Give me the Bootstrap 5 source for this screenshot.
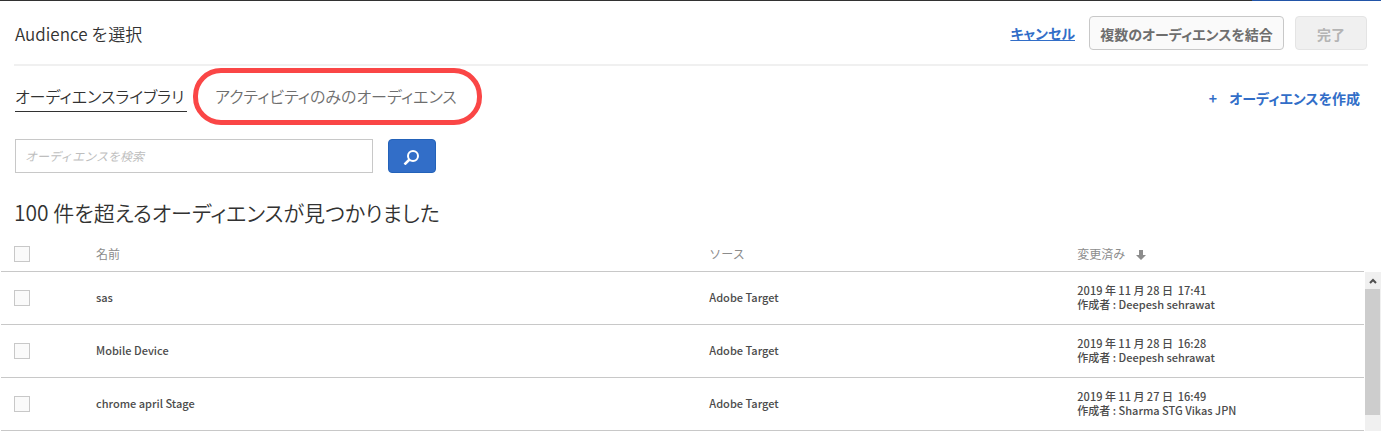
<!DOCTYPE html>
<html lang="ja">
<head>
<meta charset="utf-8">
<meta name="viewport" content="width=device-width, initial-scale=1">
<title>Audience を選択</title>
<link href="https://cdn.jsdelivr.net/npm/bootstrap@5.3.0/dist/css/bootstrap.min.css" rel="stylesheet">
<style>
body{font-family:"Noto Sans CJK JP",sans-serif;font-weight:400;font-size:12px;line-height:14px;color:#4b4b4b;background:#fff}
.page-edge{height:1px;background:#323232}
.page-edge span{width:129px;background:#2255a8}
.blue{color:#326ec8}
.dialog-head{margin:0 13px 0 14px;padding:15px 1px 13px;border-bottom:2px solid #f0f0f0}
.dialog-title{font-size:17px;line-height:35px;font-weight:350;color:#323232}
.act{font-size:14px;line-height:20px;font-weight:700;font-feature-settings:"palt"}
.act-btn{height:34px;padding:2px 4px 0;border-radius:4px;border:1px solid #c8c8c8;background:#fafafa;color:#6e6e6e;width:72px}
.act-btn:disabled{opacity:1;border-color:#e4e4e4;background:#f0f0f0;color:#b4b4b4}
.merge-btn{width:195px;margin:0 11px 0 14px}
.tab-row{padding:17px 21px 0 15px}
.tab-link{font-size:16px;line-height:26px;padding-bottom:2px;font-weight:350;font-feature-settings:"palt";color:#6e6e6e;text-decoration:none;position:relative}
.tab-link.current{color:#323232;border-bottom:1px solid #323232;min-width:172px}
.callout{min-width:245px;margin-left:28px}
.callout::after{content:"";position:absolute;inset:-15px -22px -13px;border:5px solid #fa4646;border-radius:28px;pointer-events:none}
.search-row{padding:27px 15px 0;gap:15px}
.search-box{width:358px;height:34px;padding:0 9px 2px;border:1px solid #c8c8c8;border-radius:0;font-size:12px}
.search-box::placeholder{font-style:italic;color:#bebebe;opacity:1}
.search-btn{width:48px;height:34px;border:1px solid #2362b9;border-radius:4px;background:#326ec8}
.result-title{font-size:21px;line-height:30px;font-weight:350;font-feature-settings:"palt";color:#323232;padding:24px 14px 1px}
.list-area{padding:6px 0 0 1px}
.list-grid{table-layout:fixed;width:100%;border-collapse:collapse}
.list-grid tr{border-bottom:1px solid #c8c8c8}
.list-grid th{height:37px;font-weight:400;color:#8c8c8c;padding:3px 0 0}
.list-grid td{height:53px;padding:0 0 2px;vertical-align:middle;font-size:11px;font-weight:500}
.list-grid .pick{width:95px;padding:0 0 0 13px}
.list-grid th.pick{padding-top:4px}
.col-name{width:45%}.col-source{width:27%}
.tick{appearance:none;display:block;width:16px;height:16px;margin:0;border:1px solid #c8c8c8;background:#fafafa}
.tick:checked{background:#326ec8}
.scroll-rail{width:16px;background:#f0f0f0;margin:38px 0 0 1px}
.scroll-rail button{height:17px}
.scroll-thumb{height:126px;width:15px;background:#cdcdcd}
</style>
<script src="https://cdn.jsdelivr.net/npm/bootstrap@5.3.0/dist/js/bootstrap.bundle.min.js"></script>
</head>
<body>
<div class="page-edge d-flex justify-content-end"><span></span></div>
<main>
<header class="dialog-head d-flex align-items-start justify-content-between">
  <h1 class="dialog-title m-0">Audience を選択</h1>
  <div class="d-flex align-items-center">
    <a href="#" class="act blue">キャンセル</a>
    <button type="button" class="act act-btn merge-btn">複数のオーディエンスを結合</button>
    <button type="button" class="act act-btn" disabled>完了</button>
  </div>
</header>
<div class="tab-row d-flex justify-content-between align-items-center">
  <nav class="d-flex" aria-label="オーディエンス">
    <a href="#" class="tab-link current" aria-current="page">オーディエンスライブラリ</a>
    <a href="#" class="tab-link callout">アクティビティのみのオーディエンス</a>
  </nav>
  <a href="#" class="act blue text-decoration-none d-flex gap-2"><span class="me-1">+</span><span>オーディエンスを作成</span></a>
</div>
<form class="search-row d-flex" role="search">
  <input type="text" class="search-box" placeholder="オーディエンスを検索" aria-label="オーディエンスを検索">
  <button type="button" class="search-btn p-0 d-flex align-items-center justify-content-center" aria-label="検索">
    <svg width="18" height="18" viewBox="0 0 18 18" fill="none" stroke="#fff" stroke-width="2"><circle cx="10" cy="9" r="5"/><path d="M6.500 12.500 1.500 17.500" stroke-width="2.500"/></svg>
  </button>
</form>
<h2 class="result-title m-0">100 件を超えるオーディエンスが見つかりました</h2>
<div class="list-area d-flex">
  <table class="list-grid">
    <thead><tr>
      <th class="pick"><input type="checkbox" class="tick" aria-label="すべて選択"></th>
      <th class="col-name">名前</th><th class="col-source">ソース</th>
      <th>変更済み <svg class="ms-2" width="10" height="11" viewBox="0 0 10 11" fill="#8c8c8c"><path d="M3 0h4v5h3L5 10 0 5h3z"/></svg></th>
    </tr></thead>
    <tbody>
      <tr><td class="pick"><input type="checkbox" class="tick" aria-label="sas"></td><td>sas</td><td>Adobe Target</td><td><div>2019 年 11 月 28 日&nbsp; 17:41</div><div>作成者 : Deepesh sehrawat</div></td></tr>
      <tr><td class="pick"><input type="checkbox" class="tick" aria-label="Mobile Device"></td><td>Mobile Device</td><td>Adobe Target</td><td><div>2019 年 11 月 28 日&nbsp; 16:28</div><div>作成者 : Deepesh sehrawat</div></td></tr>
      <tr><td class="pick"><input type="checkbox" class="tick" aria-label="chrome april Stage"></td><td>chrome april Stage</td><td>Adobe Target</td><td><div>2019 年 11 月 27 日&nbsp; 16:49</div><div>作成者 : Sharma STG Vikas JPN</div></td></tr>
    </tbody>
  </table>
  <div class="scroll-rail flex-shrink-0">
    <button type="button" class="border-0 bg-transparent p-0 w-100 d-flex align-items-center justify-content-center" aria-label="上へスクロール"><svg width="8" height="6" viewBox="0 0 8 6" fill="none" stroke="#505050" stroke-width="2"><path d="M1 5 4 2 7 5"/></svg></button>
    <div class="scroll-thumb"></div>
  </div>
</div>
</main>
</body>
</html>
